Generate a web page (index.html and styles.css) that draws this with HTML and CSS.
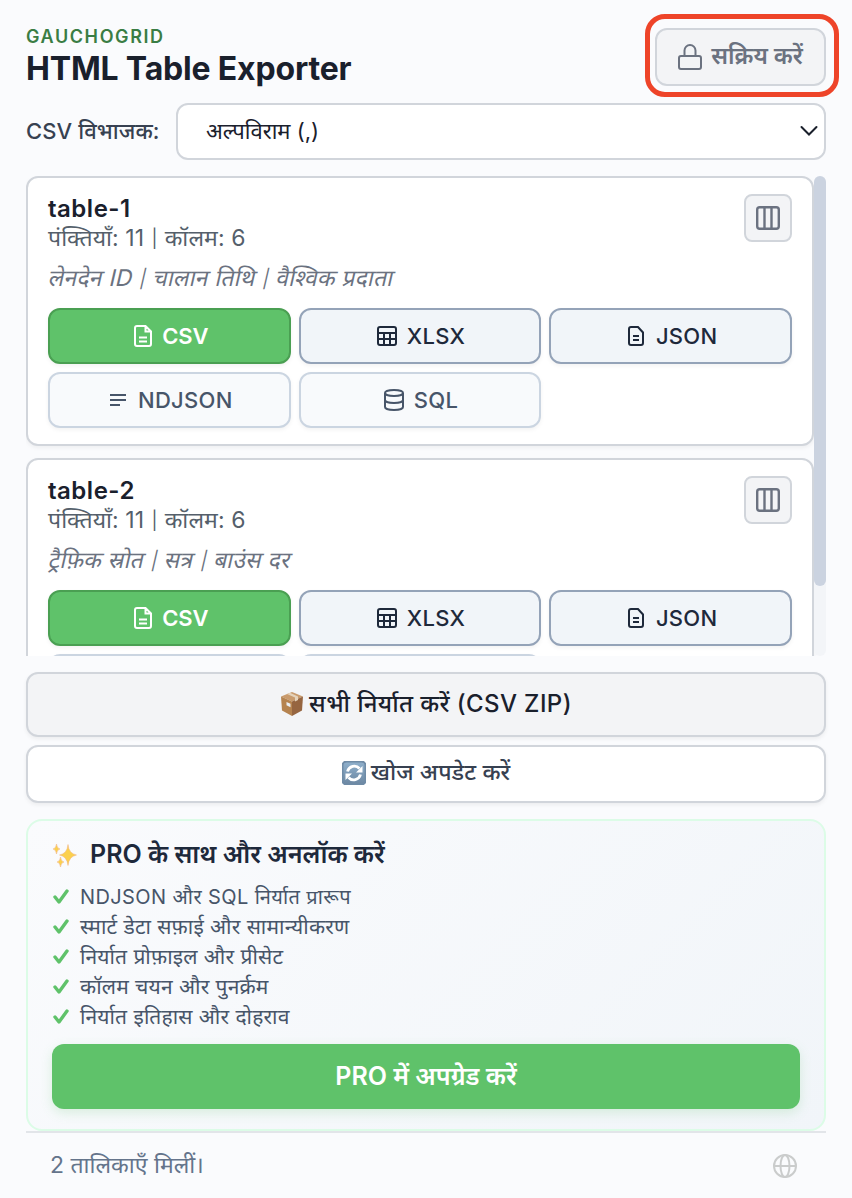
FILE: index.html
```html
<!DOCTYPE html>
<html lang="hi">
<head>
    <meta charset="UTF-8">
    <meta name="viewport" content="width=device-width, initial-scale=1.0">
    <title>HTML Table Exporter</title>
    <link rel="stylesheet" href="styles.css">
</head>
<body>
    <!-- shared icons -->
    <svg class="sprite" viewBox="0 0 24 24" fill="none">
        <symbol id="i-columns" viewBox="0 0 24 24"><rect x="1.200" y="1.200" width="21.600" height="21.600" rx="2.500"/><path d="M8.500 1v22M15.500 1v22"/></symbol>
        <symbol id="i-csv" viewBox="0 0 18 22"><path d="M3 1h8.500l5.500 5.500V19a2 2 0 0 1-2 2H3a2 2 0 0 1-2-2V3a2 2 0 0 1 2-2zM11.500 1v5.500H17M5 12.500h8M5 16.500h8"/></symbol>
        <symbol id="i-xlsx" viewBox="0 0 20 20"><rect x="1" y="1" width="18" height="18" rx="2"/><path d="M1 7h18M1 13h18M7 7v12M13 7v12"/></symbol>
        <symbol id="i-json" viewBox="0 0 16 20"><path d="M3 1h7l5 5.500V17a2 2 0 0 1-2 2H3a2 2 0 0 1-2-2V3a2 2 0 0 1 2-2zM5 10h6M5 14h6"/></symbol>
        <symbol id="i-lines" viewBox="0 0 16 12"><path d="M0 1h16M0 6h16M0 11h10"/></symbol>
        <symbol id="i-sql" viewBox="0 0 20 22"><ellipse cx="10" cy="4" rx="9" ry="3"/><path d="M1 4v14c0 1.700 4 3 9 3s9-1.300 9-3V4M1 11c0 1.700 4 3 9 3s9-1.300 9-3"/></symbol>
        <symbol id="i-check" viewBox="0 0 16 15"><path d="M2 8l4 5L14 2"/></symbol>
    </svg>

    <div class="popup">
        <header class="header">
            <div class="brand">
                <div class="brand-name">GAUCHOGRID</div>
                <h1>HTML Table Exporter</h1>
            </div>
            <button class="activate">
                <svg width="24" height="26" viewBox="0 0 24 26"><rect x="1" y="12" width="22" height="13" rx="2"/><path d="M6.500 12V6.500a5.500 5.500 0 0 1 11 0V12"/></svg>
                <span>सक्रिय करें</span>
            </button>
            <div class="highlight"></div>
        </header>

        <div class="delimiter">
            <label for="delimiter">CSV विभाजक:</label>
            <div class="select-wrap">
                <select id="delimiter">
                    <option>अल्पविराम (,)</option>
                </select>
                <svg width="18" height="12" viewBox="0 0 18 12"><path d="M1.500 2L9 9.500 16.500 2"/></svg>
            </div>
        </div>

        <div class="tables">
            <div class="table-list">
                <section class="card">
                    <div class="card-head">
                        <div>
                            <h2>table-1</h2>
                            <p class="meta">पंक्तियाँ: 11 <i>|</i> कॉलम: 6</p>
                        </div>
                        <button class="columns"><svg width="24" height="24"><use href="#i-columns"/></svg></button>
                    </div>
                    <p class="preview"><span>लेनदेन ID <i>|</i> चालान तिथि <i>|</i> वैश्विक प्रदाता</span></p>
                    <div class="formats">
                        <button class="fmt primary"><svg width="18" height="22"><use href="#i-csv"/></svg>CSV</button>
                        <button class="fmt"><svg width="20" height="20"><use href="#i-xlsx"/></svg>XLSX</button>
                        <button class="fmt json"><svg width="16" height="20"><use href="#i-json"/></svg>JSON</button>
                        <button class="fmt pro-only ndjson"><svg width="16" height="12"><use href="#i-lines"/></svg>NDJSON</button>
                        <button class="fmt pro-only"><svg width="20" height="22"><use href="#i-sql"/></svg>SQL</button>
                    </div>
                </section>
                <section class="card">
                    <div class="card-head">
                        <div>
                            <h2>table-2</h2>
                            <p class="meta">पंक्तियाँ: 11 <i>|</i> कॉलम: 6</p>
                        </div>
                        <button class="columns"><svg width="24" height="24"><use href="#i-columns"/></svg></button>
                    </div>
                    <p class="preview"><span>ट्रैफ़िक स्रोत <i>|</i> सत्र <i>|</i> बाउंस दर</span></p>
                    <div class="formats">
                        <button class="fmt primary"><svg width="18" height="22"><use href="#i-csv"/></svg>CSV</button>
                        <button class="fmt"><svg width="20" height="20"><use href="#i-xlsx"/></svg>XLSX</button>
                        <button class="fmt json"><svg width="16" height="20"><use href="#i-json"/></svg>JSON</button>
                        <button class="fmt pro-only" aria-label="NDJSON"></button>
                        <button class="fmt pro-only" aria-label="SQL"></button>
                    </div>
                </section>
            </div>
            <div class="scroll-track"><div class="scroll-thumb"></div></div>
        </div>

        <button class="export-all">
            <svg width="24" height="26" viewBox="0 0 24 26">
                <path fill="#c99b6d" d="M12 1l11 4.500-11 5L1 5.500z"/>
                <path fill="#b5834f" d="M1 5.500l11 5V25L2 19.500z"/>
                <path fill="#966540" d="M23 5.500l-11 5V25l10-5.500z"/>
                <path fill="#e5d3bb" d="M7 3l8 3.500v4l3-1.500V5.500L10 1.800z"/>
                <path fill="#e9eef2" d="M6.500 11l4 1.800v3.500l-4-2z"/>
            </svg>
            <span>सभी निर्यात करें (CSV ZIP)</span>
        </button>
        <button class="rescan">
            <svg width="24" height="24" viewBox="0 0 24 24">
                <defs><linearGradient id="tile" x2="0" y2="1"><stop stop-color="#8fb0cc"/><stop offset="1" stop-color="#6c87a2"/></linearGradient></defs>
                <rect x=".5" y=".5" width="23" height="23" rx="4" fill="url(#tile)" stroke="#6f8ba6"/>
                <path d="M5.500 10.500a7 7 0 0 1 12-3M18.500 13.500a7 7 0 0 1-12 3" fill="none" stroke="#fff" stroke-width="2.800"/>
                <path d="M20.500 5v6.500H14zM3.500 19v-6.500H10z" fill="#fff"/>
            </svg>
            <span>खोज अपडेट करें</span>
        </button>

        <section class="pro">
            <h3>
                <svg width="24" height="24" viewBox="0 0 24 24">
                    <g fill="#fbd04e" stroke="#f0b080" stroke-width=".5">
                        <path d="M15 1.500q.8 9 8.500 10.500-7.700 1.500-8.500 10.500-.8-9-8.500-10.500 7.700-1.500 8.500-10.500z"/>
                        <path d="M3.500 1q.5 4.500 3.500 5-3 .5-3.500 5Q3 6.500 0 6q3-.5 3.500-5z"/>
                        <path d="M7.500 14q.5 4.500 3.500 5-3 .5-3.500 5-.5-4.500-3.500-5 3-.5 3.500-5z"/>
                    </g>
                </svg>
                <span>PRO के साथ और अनलॉक करें</span>
            </h3>
            <ul>
                <li class="mixed"><svg width="16" height="15"><use href="#i-check"/></svg><span>NDJSON और SQL निर्यात प्रारूप</span></li>
                <li><svg width="16" height="15"><use href="#i-check"/></svg><span>स्मार्ट डेटा सफ़ाई और सामान्यीकरण</span></li>
                <li><svg width="16" height="15"><use href="#i-check"/></svg><span>निर्यात प्रोफ़ाइल और प्रीसेट</span></li>
                <li><svg width="16" height="15"><use href="#i-check"/></svg><span>कॉलम चयन और पुनर्क्रम</span></li>
                <li><svg width="16" height="15"><use href="#i-check"/></svg><span>निर्यात इतिहास और दोहराव</span></li>
            </ul>
            <button class="upgrade"><span>PRO में अपग्रेड करें</span></button>
        </section>

        <footer class="footer">
            <span>2 तालिकाएँ मिलीं।</span>
            <svg width="24" height="24" viewBox="0 0 24 24"><circle cx="12" cy="12" r="11"/><ellipse cx="12" cy="12" rx="4.500" ry="11"/><path d="M1 12h22"/></svg>
        </footer>
    </div>
</body>
</html>
```
FILE: styles.css
```css
* {
    margin: 0;
    padding: 0;
    box-sizing: border-box;
}
body {
    background: #fafbfd;
    color: #1a202c;
    font-family: Inter, "Noto Sans", "Noto Sans Devanagari", sans-serif;
    font-size: 22px;
}
button, select {
    font-family: inherit;
    font-size: inherit;
    color: inherit;
}
svg {
    fill: none;
    stroke: currentColor;
    stroke-width: 2;
    flex-shrink: 0;
}
span, p, label {
    white-space: nowrap;
}
/* Devanagari sits low in its line box */
button span, h3 span, label, .footer span {
    padding-bottom: 4px;
}
.sprite {
    display: none;
}
.popup {
    width: 852px;
    height: 1198px;
    padding: 28px 26px 0;
    overflow: hidden;
}

/* header */
.header {
    position: relative;
    display: flex;
    justify-content: space-between;
    height: 75px;
}
.brand-name {
    font-size: 18px;
    font-weight: 600;
    line-height: 18px;
    letter-spacing: 1.6px;
    color: #3a7d44;
}
h1 {
    font-size: 32px;
    font-weight: 700;
    line-height: 46px;
    letter-spacing: -0.18px;
}
.activate {
    display: flex;
    align-items: center;
    justify-content: center;
    gap: 9px;
    width: 171px;
    height: 58px;
    border: 2px solid #d1d5db;
    border-radius: 12px;
    background: #f3f4f6;
    color: #6b7280;
    font-size: 23.5px;
    font-weight: 600;
}
.highlight {
    position: absolute;
    top: -14px;
    right: -13px;
    width: 194px;
    height: 83px;
    border: 5px solid #ee4429;
    border-radius: 20px;
}

/* delimiter */
.delimiter {
    display: flex;
    align-items: center;
    justify-content: space-between;
    height: 57px;
    margin-bottom: 16px;
}
.delimiter label {
    font-weight: 500;
    letter-spacing: 0.1px;
    color: #374151;
}
.select-wrap {
    position: relative;
    width: 650px;
}
.select-wrap select {
    display: block;
    appearance: none;
    width: 100%;
    height: 57px;
    padding: 0 0 2px 28px;
    border: 2px solid #d1d5db;
    border-radius: 12px;
    background: #fff;
}
.select-wrap svg {
    position: absolute;
    right: 8px;
    top: 22px;
    stroke-linecap: round;
}

/* detected tables */
.tables {
    display: flex;
    height: 480px;
    margin-bottom: 16px;
    overflow: hidden;
}
.table-list {
    display: flex;
    flex-direction: column;
    gap: 12px;
    width: 788px;
}
.card {
    flex-shrink: 0;
    height: 270px;
    padding: 16px 20px;
    border: 2px solid #d1d5db;
    border-radius: 12px;
    background: #fff;
    box-shadow: 0 2px 4px rgba(0, 0, 0, 0.05);
}
.card-head {
    display: flex;
    justify-content: space-between;
    height: 64px;
}
h2 {
    font-size: 24px;
    font-weight: 600;
    line-height: 30px;
    letter-spacing: 0.5px;
}
.meta {
    font-size: 23px;
    line-height: 28px;
    letter-spacing: 0.1px;
    color: #555f6b;
}
/* shorter separator bars */
.card i {
    position: relative;
    top: -1px;
    margin: 0 0.6px;
    font-size: 18px;
    font-style: normal;
}
.columns {
    display: flex;
    align-items: center;
    justify-content: center;
    width: 48px;
    height: 48px;
    border: 2px solid #d1d5db;
    border-radius: 8px;
    background: #f3f4f6;
    color: #6b7280;
}
.columns svg {
    stroke-width: 2.4;
}
.preview {
    height: 50px;
    font-size: 23px;
    line-height: 40px;
    color: #6b7280;
}
/* slanted by hand, there is no italic for the Hindi glyphs */
.preview span {
    display: inline-block;
    transform: skewX(-13deg);
    margin-left: 1px;
    letter-spacing: 0.2px;
}
.formats {
    display: grid;
    grid-template-columns: repeat(3, 1fr);
    gap: 8px;
}
.fmt {
    display: flex;
    align-items: center;
    justify-content: center;
    gap: 10px;
    height: 56px;
    padding-left: 2px;
    border: 2px solid #94a3b8;
    border-radius: 12px;
    background: #f1f5f9;
    box-shadow: 0 2px 4px rgba(0, 0, 0, 0.05);
    color: #1e293b;
    font-weight: 500;
    letter-spacing: 0.3px;
}
.fmt.json, .fmt.ndjson {
    gap: 12px;
    padding-left: 4px;
}
.fmt.primary {
    padding-left: 4px;
    border-color: #4a9f52;
    background: #5fc26a;
    color: #fff;
    font-weight: 600;
    letter-spacing: -0.2px;
}
.fmt.pro-only {
    border-color: #cbd5e1;
    background: #f8fafc;
    color: #475569;
}
.scroll-track {
    width: 12px;
    border-radius: 6px;
    background: #f3f5f8;
}
.scroll-thumb {
    height: 410px;
    border-radius: 6px;
    background: #cbd3e0;
}

/* main actions */
.export-all, .rescan {
    display: flex;
    align-items: center;
    justify-content: center;
    gap: 5px;
    width: 100%;
    border: 2px solid #d1d5db;
    border-radius: 12px;
    box-shadow: 0 2px 4px rgba(0, 0, 0, 0.06);
    font-weight: 500;
}
.export-all {
    height: 65px;
    margin-bottom: 8px;
    padding-bottom: 1px;
    background: #f3f4f6;
    font-size: 24px;
    letter-spacing: 0.4px;
}
.rescan {
    height: 58px;
    margin-bottom: 16px;
    padding-bottom: 2px;
    background: #fff;
    font-size: 23px;
    letter-spacing: 0.1px;
    color: #374151;
}
.export-all svg, .rescan svg, .pro h3 svg {
    stroke: none;
}

/* pro panel */
.pro {
    height: 312px;
    padding: 16px 24px 0;
    border: 2px solid #dcfce7;
    border-radius: 16px;
    background: linear-gradient(135deg, #fafbfd, #f1f5f9);
}
.pro h3 {
    display: flex;
    align-items: center;
    gap: 13px;
    height: 36px;
    margin-bottom: 8px;
    padding-left: 1px;
    font-size: 25px;
    font-weight: 600;
    color: #1e293b;
}
.pro ul {
    height: 163px;
    list-style: none;
    font-size: 21px;
    letter-spacing: 0.2px;
    color: #475569;
}
.pro .mixed {
    font-size: 20px;
    letter-spacing: 0.4px;
}
.pro li {
    display: flex;
    align-items: center;
    gap: 11px;
    height: 30px;
    padding-left: 1px;
}
.pro li svg {
    color: #5fc26a;
    stroke-width: 3.4;
    stroke-linecap: round;
    stroke-linejoin: round;
}
.upgrade {
    display: flex;
    align-items: center;
    justify-content: center;
    width: 100%;
    height: 65px;
    border: none;
    border-radius: 12px;
    background: #5fc26a;
    box-shadow: 0 4px 12px rgba(95, 194, 106, 0.2);
    color: #fff;
    font-size: 25px;
    font-weight: 600;
}

/* status bar */
.footer {
    display: flex;
    align-items: center;
    justify-content: space-between;
    height: 67px;
    padding: 0 29px 0 24px;
    border-top: 2px solid #e2e5e9;
    font-size: 23px;
    color: #64748b;
}
.footer svg {
    color: #cacccc;
}
```
